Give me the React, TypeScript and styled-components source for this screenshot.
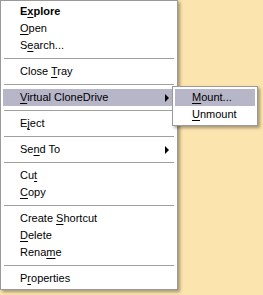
import styled, { createGlobalStyle } from "styled-components";

const GlobalStyle = createGlobalStyle`
  html, body {
    margin: 0;
    padding: 0;
    background: #fce4ae;
  }
  body {
    font-family: "Liberation Sans", Arial, sans-serif;
    font-size: 11px;
    color: #000;
  }
`;

type Entry =
  | { kind: "sep" }
  | {
      kind: "item";
      before: string;
      key: string;
      after: string;
      bold?: boolean;
      arrow?: boolean;
      active?: boolean;
      sub?: boolean;
    };

const entries: Entry[] = [
  { kind: "item", before: "E", key: "x", after: "plore", bold: true },
  { kind: "item", before: "", key: "O", after: "pen" },
  { kind: "item", before: "S", key: "e", after: "arch..." },
  { kind: "sep" },
  { kind: "item", before: "Close ", key: "T", after: "ray" },
  { kind: "sep" },
  {
    kind: "item",
    before: "",
    key: "V",
    after: "irtual CloneDrive",
    arrow: true,
    active: true,
    sub: true,
  },
  { kind: "sep" },
  { kind: "item", before: "E", key: "j", after: "ect" },
  { kind: "sep" },
  { kind: "item", before: "Se", key: "n", after: "d To", arrow: true },
  { kind: "sep" },
  { kind: "item", before: "Cu", key: "t", after: "" },
  { kind: "item", before: "", key: "C", after: "opy" },
  { kind: "sep" },
  { kind: "item", before: "Create ", key: "S", after: "hortcut" },
  { kind: "item", before: "", key: "D", after: "elete" },
  { kind: "item", before: "Rena", key: "m", after: "e" },
  { kind: "sep" },
  { kind: "item", before: "P", key: "r", after: "operties" },
];

const App = () => {
  return (
    <Page>
      <GlobalStyle />
      <Menu $width={178}>
        {entries.map((e, i) =>
          e.kind === "sep" ? (
            <Separator key={i} />
          ) : (
            <Item key={i} $active={e.active} $bold={e.bold}>
              <Label>
                {e.before}
                <u>{e.key}</u>
                {e.after}
              </Label>
              {e.arrow && <Arrow />}
              {e.sub && (
                <SubMenu>
                  <Menu $width={86}>
                    <Item $active $indent={17}>
                      <Label>
                        <u>M</u>ount...
                      </Label>
                    </Item>
                    <Item $indent={17}>
                      <Label>
                        <u>U</u>nmount
                      </Label>
                    </Item>
                  </Menu>
                </SubMenu>
              )}
            </Item>
          )
        )}
      </Menu>
    </Page>
  );
};

const Page = styled.div`
  width: 263px;
  height: 295px;
  overflow: hidden;
  background: #fce4ae;
`;

const Menu = styled.div<{ $width: number }>`
  width: ${(p) => p.$width}px;
  box-sizing: border-box;
  background: #fff;
  border: 1px solid #9a9a9a;
  padding: 2px;
  display: flex;
  flex-direction: column;
  box-shadow: 2px 2px 3px rgba(0, 0, 0, 0.35);
`;

const Item = styled.div<{ $active?: boolean; $bold?: boolean; $indent?: number }>`
  position: relative;
  height: 17px;
  display: flex;
  align-items: center;
  padding-left: ${(p) => p.$indent ?? 17}px;
  padding-right: 6px;
  background: ${(p) => (p.$active ? "#b7b5c8" : "transparent")};
  font-weight: ${(p) => (p.$bold ? "bold" : "normal")};
  white-space: nowrap;
`;

const Label = styled.span`
  flex: 1;
  line-height: 17px;

  u {
    text-decoration-thickness: 1px;
    text-underline-offset: 2px;
  }
`;

const Arrow = styled.span`
  width: 0;
  height: 0;
  border-top: 4px solid transparent;
  border-bottom: 4px solid transparent;
  border-left: 4px solid #000;
`;

const Separator = styled.div`
  height: 9px;
  display: flex;
  align-items: center;
  padding: 0 1px;

  &::after {
    content: "";
    flex: 1;
    height: 1px;
    background: #a0a0a0;
  }
`;

const SubMenu = styled.div`
  position: absolute;
  left: 169px;
  top: -3px;
  z-index: 2;
`;

export default App;
